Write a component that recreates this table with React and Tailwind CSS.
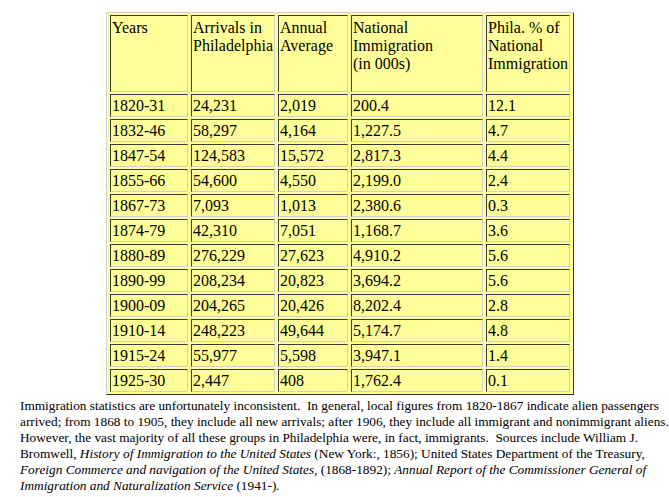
import React from 'react';

const rows = [
  ['1820-31', '24,231', '2,019', '200.4', '12.1'],
  ['1832-46', '58,297', '4,164', '1,227.5', '4.7'],
  ['1847-54', '124,583', '15,572', '2,817.3', '4.4'],
  ['1855-66', '54,600', '4,550', '2,199.0', '2.4'],
  ['1867-73', '7,093', '1,013', '2,380.6', '0.3'],
  ['1874-79', '42,310', '7,051', '1,168.7', '3.6'],
  ['1880-89', '276,229', '27,623', '4,910.2', '5.6'],
  ['1890-99', '208,234', '20,823', '3,694.2', '5.6'],
  ['1900-09', '204,265', '20,426', '8,202.4', '2.8'],
  ['1910-14', '248,223', '49,644', '5,174.7', '4.8'],
  ['1915-24', '55,977', '5,598', '3,947.1', '1.4'],
  ['1925-30', '2,447', '408', '1,762.4', '0.1'],
];

// cell widths in px, borders included
const widths = ['w-[78px]', 'w-[84px]', 'w-[70px]', 'w-[132px]', 'w-[84px]'];

const cell =
  'border border-t-[#3a3a3a] border-l-[#3a3a3a] border-r-[#cfcfcf] border-b-[#cfcfcf] p-px text-left';

export default function App() {
  return (
    <div className="bg-white min-h-[497px] w-[669px] text-black font-['Liberation_Serif',serif]">
      <div className="pt-3 pl-[106px]">
        <table className="border-separate border-spacing-x-[3px] border-spacing-y-[2px] border border-t-[#d0d0d0] border-l-[#d0d0d0] border-r-[#333] border-b-[#333] bg-[#ffff99] text-[16px] leading-[18px] table-fixed w-[467px]">
          <thead>
            <tr>
              <th className={`${cell} ${widths[0]} h-[77px] pt-[3px] align-top font-normal`}>Years</th>
              <th className={`${cell} ${widths[1]} pt-[3px] align-top font-normal`}>Arrivals in Philadelphia</th>
              <th className={`${cell} ${widths[2]} pt-[3px] align-top font-normal`}>Annual Average</th>
              <th className={`${cell} ${widths[3]} pt-[3px] align-top font-normal`}>
                National<br />Immigration<br />(in 000s)
              </th>
              <th className={`${cell} ${widths[4]} pt-[3px] align-top font-normal`}>
                Phila. % of National Immigration
              </th>
            </tr>
          </thead>
          <tbody>
            {rows.map((r) => (
              <tr key={r[0]}>
                {r.map((v, i) => (
                  <td key={i} className={`${cell} h-[23px] align-middle`}>{v}</td>
                ))}
              </tr>
            ))}
          </tbody>
        </table>
      </div>

      <p className="pl-5 pt-[3px] text-[13.3px] leading-4 whitespace-nowrap">
        Immigration statistics are unfortunately inconsistent.&nbsp; In general, local figures from 1820-1867 indicate alien passengers<br />
        arrived; from 1868 to 1905, they include all new arrivals; after 1906, they include all immigrant and nonimmigrant aliens.<br />
        However, the vast majority of all these groups in Philadelphia were, in fact, immigrants.&nbsp; Sources include William J.<br />
        Bromwell, <i>History of Immigration to the United States</i> (New York:, 1856); United States Department of the Treasury,<br />
        <i>Foreign Commerce and navigation of the United States</i>, (1868-1892); <i>Annual Report of the Commissioner General of</i><br />
        <i>Immigration and Naturalization Service</i> (1941-).
      </p>
    </div>
  );
}
